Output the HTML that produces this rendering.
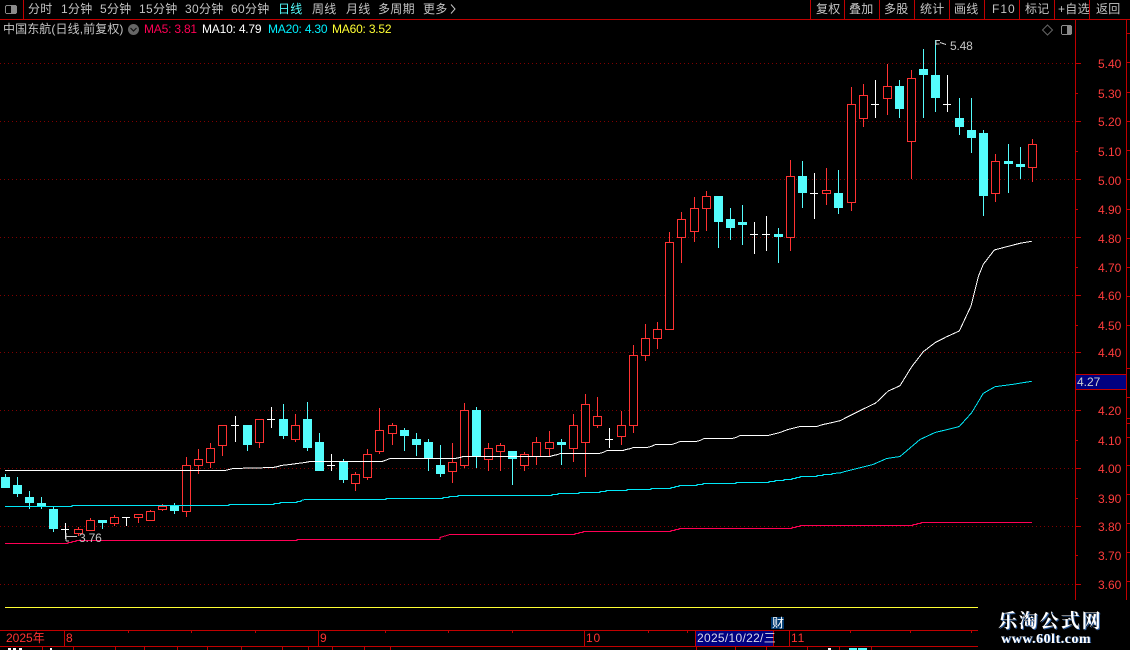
<!DOCTYPE html>
<html><head><meta charset="utf-8"><title>中国东航</title>
<style>
html,body{margin:0;padding:0;background:#000;width:1130px;height:650px;overflow:hidden}
#a{position:relative;width:1130px;height:650px;overflow:hidden;background:#000;font:12px/14px "Liberation Sans","WenQuanYi Zen Hei","Noto Sans CJK SC",sans-serif}
#a span{position:absolute;white-space:nowrap;letter-spacing:.3px}
.t{color:#c4c4c4;top:2px}
.l{top:22px}
#a .m{letter-spacing:-.2px}
.y{color:#ff3c3c;left:1098px}
#a .y{letter-spacing:0}
.d{color:#ff3232;top:631px}
svg{position:absolute;left:0;top:0}
</style></head><body><div id="a">
<svg width="1130" height="650" viewBox="0 0 1130 650" shape-rendering="crispEdges" fill="none">
<!-- grid -->
<path shape-rendering="auto" stroke="#800000" stroke-dasharray="1 3" d="M0 63.5H1075M0 121.5H1075M0 179.5H1075M0 237.5H1075M0 295.5H1075M0 352.5H1075M0 410.5H1075M0 468.5H1075M0 526.5H1075M0 584.5H1075"/>
<!-- frame -->
<path stroke="#c00000" d="M0 19.5H1130M23.5 0V19M810.5 0V19M844.5 0V19M879.5 0V19M914.5 0V19M949.5 0V19M984.5 0V19M1019.5 0V19M1054.5 0V19M1089.5 0V19M1075.5 19V600M1126.5 19V600
M1075 63.5h6M1075 93.5h3M1075 121.5h6M1075 151.5h3M1075 179.5h6M1075 209.5h3M1075 237.5h6M1075 267.5h3M1075 295.5h6M1075 325.5h3M1075 352.5h6M1075 410.5h6M1075 440.5h3M1075 468.5h6M1075 498.5h3M1075 526.5h6M1075 555.5h3M1075 584.5h6
M1126 33.5h4M1126 62.5h4M1126 92.5h4M1126 121.5h4M1126 150.5h4M1126 179.5h4M1126 209.5h4M1126 238.5h4M1126 267.5h4M1126 296.5h4M1126 325.5h4M1126 368.5h4M1126 397.5h4M1126 418.5h4M1126 423.5h4M1126 437.5h4M1126 465.5h4M1126 494.5h4M1126 523.5h4M1126 552.5h4M1126 581.5h4
M0 630.5H978M0 646.5H978M64.5 630V646M318.5 630V646M584.5 630V646M789.5 630V646M128.5 630v3M191.5 630v3M255.5 630v3M385.5 630v3M448.5 630v3M512.5 630v3M648.5 630v3M687.5 630v3M850.5 630v3M910.5 630v3M971.5 630v3
M42.5 646v4M73.5 646v4M115.5 646v4M144.5 646v4M177.5 646v4M207.5 646v4M241.5 646v4M282.5 646v4M308.5 646v4M332.5 646v4M364.5 646v4M390.5 646v4M696.5 646v4M735.5 646v4M766.5 646v4M807.5 646v4M839.5 646v4M871.5 646v4"/>
<path fill="#000080" stroke="#c00000" d="M1075.5 374.5h51v15h-51z"/>
<path fill="#000080" stroke="#c00000" d="M695.5 630.5h78v16h-78z"/>
<rect x="771" y="617" width="13" height="12" fill="#003a70"/>
<path stroke="#ffff33" d="M5 607.5H978"/>
<path fill="#fff" d="M8 648h3v2H8zM13 648h3v2h-3zM19 648h3v2h-3zM50 648h2v2h-2zM828 648h3v2h-3z"/>
<path fill="#54fcfc" d="M849 648h8v2h-8zM858 648h9v2h-9z"/>
<!-- red wicks -->
<path stroke="#ff3232" d="M78.500 527V536M90.500 518V530M114.500 515V526M138.500 514V523M150.500 510V520M162.500 504V511M186.500 457V517M198.500 449V474M210.500 443V468M222.500 425V456M259.500 419V448M295.500 414V442M355.500 472V491M367.500 449V480M379.500 408V454M392.500 423V445M452.500 443V483M464.500 403V468M488.500 443V471M500.500 443V471M524.500 452V471M536.500 437V465M549.500 431V456M573.500 414V462M585.500 394V477M597.500 397V428M621.500 411V445M633.500 345V433M645.500 324V361M657.500 322V349M669.500 232V330M681.500 212V263M694.500 197V242M706.500 191V231M790.500 160V251M826.500 168V205M851.500 87V211M863.500 84V127M887.500 64V115M911.500 70V179M995.500 154V202M1032.500 139V182"/>
<!-- red bodies -->
<path stroke="#ff3232" fill="#000" d="M74.500 529.500h8v4h-8zM86.500 520.500h8v10h-8zM110.500 517.500h8v6h-8zM134.500 514.500h8v3h-8zM146.500 511.500h8v9h-8zM158.500 506.500h8v3h-8zM182.500 465.500h8v46h-8zM194.500 459.500h8v6h-8zM206.500 448.500h8v14h-8zM218.500 425.500h8v20h-8zM255.500 419.500h8v23h-8zM291.500 425.500h8v14h-8zM351.500 474.500h8v9h-8zM363.500 454.500h8v23h-8zM375.500 430.500h8v21h-8zM388.500 425.500h8v8h-8zM448.500 462.500h8v9h-8zM460.500 410.500h8v55h-8zM484.500 448.500h8v11h-8zM496.500 445.500h8v6h-8zM520.500 454.500h8v11h-8zM532.500 442.500h8v14h-8zM545.500 442.500h8v6h-8zM569.500 425.500h8v23h-8zM581.500 404.500h8v38h-8zM593.500 416.500h8v9h-8zM617.500 425.500h8v11h-8zM629.500 355.500h8v70h-8zM641.500 338.500h8v17h-8zM653.500 329.500h8v9h-8zM665.500 242.500h8v87h-8zM677.500 219.500h8v18h-8zM690.500 208.500h8v23h-8zM702.500 196.500h8v12h-8zM786.500 176.500h8v61h-8zM822.500 190.500h8v3h-8zM847.500 104.500h8v98h-8zM859.500 95.500h8v23h-8zM883.500 86.500h8v12h-8zM907.500 78.500h8v63h-8zM991.500 161.500h8v32h-8zM1028.500 144.500h8v23h-8z"/>
<!-- cyan wicks -->
<path stroke="#54fcfc" d="M5.500 474V488M17.500 477V497M29.500 491V509M41.500 497V509M53.500 507V532M102.500 520V529M174.500 503V514M247.500 425V451M283.500 404V439M307.500 402V451M319.500 433V471M343.500 459V483M404.500 428V451M416.500 433V456M428.500 439V471M440.500 445V477M476.500 407V468M512.500 451V485M561.500 439V465M718.500 196V248M730.500 208V240M742.500 205V245M778.500 228V263M802.500 161V208M838.500 170V214M899.500 80V118M923.500 49V118M935.500 40V112M959.500 98V135M971.500 98V153M983.500 130V216M1008.500 144V193M1020.500 147V179"/>
<!-- cyan bodies -->
<path fill="#54fcfc" d="M1 477h9v11H1zM13 485h9v9h-9zM25 497h9v6h-9zM37 503h9v4h-9zM49 509h9v20h-9zM98 520h9v3h-9zM170 506h9v5h-9zM243 425h9v20h-9zM279 419h9v17h-9zM303 419h9v29h-9zM315 442h9v29h-9zM339 462h9v18h-9zM400 430h9v6h-9zM412 439h9v6h-9zM424 442h9v16h-9zM436 465h9v9h-9zM472 410h9v46h-9zM508 451h9v8h-9zM557 442h9v3h-9zM714 196h9v26h-9zM726 219h9v9h-9zM738 222h9v3h-9zM774 234h9v3h-9zM798 176h9v17h-9zM834 193h9v15h-9zM895 86h9v23h-9zM919 69h9v6h-9zM931 75h9v23h-9zM955 118h9v9h-9zM967 130h9v8h-9zM979 133h9v63h-9zM1004 161h9v3h-9zM1016 164h9v3h-9z"/>
<!-- white doji -->
<path stroke="#fff" d="M65.500 523V539M61 529.500h8M126.500 517V526M122 517.500h8M235.500 416V442M231 425.500h8M271.500 407V428M267 419.500h8M331.500 454V471M327 465.500h8M609.500 428V448M605 439.500h8M754.500 222V254M750 234.500h8M766.500 216V251M762 234.500h8M814.500 173V219M810 193.500h8M875.500 80V118M871 104.500h8M947.500 75V112M943 104.500h8"/>
<!-- MA pink -->
<polyline stroke="#ff0055" points="5,543.5 68,543.5 68,542.5 72,542.500 72,541.500 76,541.500 76,540.500 297,540.500 297,539.500 440,539.500 440,537.500 450,534.500 560,534.500 575,534.500 575,533.500 579,533.500 579,532.500 583,532.500 583,531.500 671,531.500 671,530.500 675,530.500 675,529.500 679,529.500 679,528.500 792,528.500 792,527.500 796,527.500 796,526.500 800,526.500 800,525.500 913,525.500 913,524.500 917,524.500 917,523.500 921,523.500 921,522.500 1032,522.500"/>
<!-- MA cyan -->
<polyline stroke="#00e8f8" points="5,506.500 72,506.500 72,505.500 229,505.500 229,504.500 274,504.500 274,503.500 280,503.500 280,502.500 297,502.500 297,501.500 301,501.500 301,500.500 305,499.500 386,499.500 386,498.500 443,498.500 443,497.500 449,497.500 449,496.500 458,496.500 458,495.500 552,495.500 552,494.500 558,494.500 558,493.500 579,493.500 579,492.500 600,492.500 600,491.500 606,491.500 606,490.500 627,490.500 627,489.500 651,489.500 651,488.500 671,488.500 671,487.500 675,487.500 675,486.500 679,486.500 679,485.500 697,485.500 697,484.500 703,484.500 703,483.500 736,483.500 736,482.500 769,482.500 769,481.500 775,481.500 775,480.500 784,480.500 784,479.500 792,479.500 792,478.500 796,478.500 796,477.500 800,477.500 800,476.500 817,476.500 817,475.500 823,475.500 823,474.500 832,474.500 832,473.500 840,473 845,471.500 873,464.500 886.700,458.500 900,456.500 920,439.500 935,432.500 946.700,429.700 959.300,426.500 971.700,412.700 979.300,400 983.300,393.300 995,386.700 1013,384.300 1031.700,381.300"/>
<!-- MA white -->
<polyline stroke="#fff" points="5,470.500 225,470.500 229,469.500 233,468.500 273,467.500 278,466.500 281,465.500 290,464.500 297,463.500 305,462.500 310,461.500 382,461.500 385,460.500 390,458.500 455,458.500 460,457.500 463,456.500 550,456.500 553,455.500 558,454.500 560,453.500 599,453.500 603,452.500 607,450.500 623,450.500 626,449.500 631,448.500 633,447.500 647,447.500 651,446.500 655,444.700 671,444.700 675,443.500 680,441.500 696,441.500 700,440.500 704,438.500 732,438.500 736,437.500 740,435.500 768,435.500 772,434.500 780,432.500 788,429.500 800,426.500 816.700,426.500 823,424.500 828,423.500 840,420.700 862.700,409.300 875.700,403 888.300,391 900,385.700 911.700,366.700 923.300,351.700 935,342.700 946.700,336.700 959.300,331 971,306 978.300,276.700 983.300,264.300 994.300,250 1006.700,246.700 1020,243.300 1031.700,241.300"/>
<!-- flags -->
<path stroke="#c4c4c4" d="M936 40.500h4M936 40V45M936.500 44h3M940 42.500l6 2M66 533v8M66 536.500h11M66 541h3"/>
<!-- icons -->
<rect x="5.500" y="5.500" width="11" height="8" rx="1.500" stroke="#8a8a8a"/>
<rect x="11" y="6" width="5" height="7" fill="#8a8a8a"/>
<rect x="1061.500" y="25.500" width="10" height="9" rx="1.500" stroke="#8a8a8a"/>
<rect x="1067" y="26" width="4" height="8" fill="#8a8a8a"/>
<circle cx="133.500" cy="29.500" r="5.500" fill="#666" shape-rendering="auto"/>
<path d="M130.500 28l3 3 3-3" stroke="#111" stroke-width="1.200" shape-rendering="auto"/>
<path d="M1047.500 25l5 5-5 5-5-5z" stroke="#666" shape-rendering="auto"/>
<path d="M451 4.500l4 4.500-4 4.500" stroke="#c4c4c4" shape-rendering="auto"/>
</svg>

<span class="t" style="left:28px">分时</span>
<span class="t" style="left:61px">1分钟</span>
<span class="t" style="left:100px">5分钟</span>
<span class="t" style="left:139px">15分钟</span>
<span class="t" style="left:185px">30分钟</span>
<span class="t" style="left:231px">60分钟</span>
<span class="t" style="left:278px;color:#54fcfc">日线</span>
<span class="t" style="left:312px">周线</span>
<span class="t" style="left:346px">月线</span>
<span class="t" style="left:378px">多周期</span>
<span class="t" style="left:423px">更多</span>
<span class="t" style="left:816px">复权</span>
<span class="t" style="left:849px">叠加</span>
<span class="t" style="left:884px">多股</span>
<span class="t" style="left:920px">统计</span>
<span class="t" style="left:954px">画线</span>
<span class="t" style="left:992px;letter-spacing:1px">F10</span>
<span class="t" style="left:1025px">标记</span>
<span class="t" style="left:1058px">+自选</span>
<span class="t" style="left:1096px">返回</span>

<span class="l" style="left:3px;color:#c4c4c4;letter-spacing:.1px">中国东航(日线,前复权)</span>
<span class="l m" style="left:144px;color:#ff0055">MA5: 3.81</span>
<span class="l m" style="left:202px;color:#fff">MA10: 4.79</span>
<span class="l m" style="left:268px;color:#00f0ff">MA20: 4.30</span>
<span class="l m" style="left:332px;color:#ffff33">MA60: 3.52</span>

<span class="m" style="left:950px;top:39px;color:#c4c4c4">5.48</span>
<span class="m" style="left:79px;top:531px;color:#c4c4c4">3.76</span>

<span class="y" style="top:57px">5.40</span>
<span class="y" style="top:87px">5.30</span>
<span class="y" style="top:115px">5.20</span>
<span class="y" style="top:145px">5.10</span>
<span class="y" style="top:174px">5.00</span>
<span class="y" style="top:203px">4.90</span>
<span class="y" style="top:232px">4.80</span>
<span class="y" style="top:261px">4.70</span>
<span class="y" style="top:289px">4.60</span>
<span class="y" style="top:319px">4.50</span>
<span class="y" style="top:346px">4.40</span>
<span class="m" style="left:1077px;top:375px;color:#d0d0d0;letter-spacing:0">4.27</span>
<span class="y" style="top:404px">4.20</span>
<span class="y" style="top:434px">4.10</span>
<span class="y" style="top:462px">4.00</span>
<span class="y" style="top:492px">3.90</span>
<span class="y" style="top:520px">3.80</span>
<span class="y" style="top:549px">3.70</span>
<span class="y" style="top:578px">3.60</span>

<span class="d" style="left:6px;letter-spacing:0">2025年</span>
<span class="d" style="left:66px">8</span>
<span class="d" style="left:320px">9</span>
<span class="d" style="left:586px;letter-spacing:.8px">10</span>
<span class="d" style="left:791px;letter-spacing:.8px">11</span>
<span style="left:697px;top:631px;color:#d8d8e8;letter-spacing:.3px">2025/10/22/三</span>
<span style="left:772px;top:616px;color:#fff;font-size:12px">财</span>

<span style="left:998px;top:609px;font:700 19px/22px 'Noto Serif CJK SC',serif;letter-spacing:1.900px;color:#fff;text-shadow:1px 1px 0 #2a5a9a">乐淘公式网</span>
<span style="left:1001px;top:632px;font:700 14px/16px 'Liberation Serif',serif;letter-spacing:.5px;color:#fff;text-shadow:1px 0 0 #2a5a9a">www.60lt.com</span>
</div></body></html>
